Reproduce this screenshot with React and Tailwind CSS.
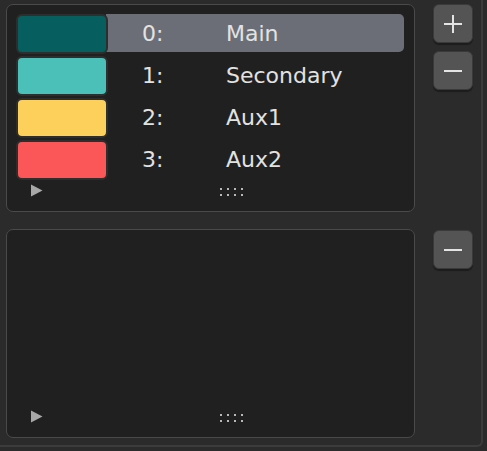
import React from "react";

const slots = [
  { id: 0, name: "Main", color: "bg-[#075e5e]", active: true },
  { id: 1, name: "Secondary", color: "bg-[#4bc0b8]" },
  { id: 2, name: "Aux1", color: "bg-[#fdd05c]" },
  { id: 3, name: "Aux2", color: "bg-[#fb5758]" },
];

const Grip = () => (
  <div className="grid grid-cols-4 gap-x-[5px] gap-y-[4px]">
    {Array.from({ length: 8 }).map((_, i) => (
      <span key={i} className="block w-[2px] h-[2px] bg-[#b8b8b8]" />
    ))}
  </div>
);

const Footer = () => (
  <div className="flex items-center h-[16px] mt-auto">
    <svg width="13" height="13" viewBox="0 0 13 13" className="ml-[14px]">
      <path d="M1 0.5 L12.5 6.5 L1 12.5 Z" fill="#a8a8a8" />
    </svg>
    <div className="ml-[177px] mt-[3px]">
      <Grip />
    </div>
  </div>
);

const IconButton = ({ plus }) => (
  <button className="w-[40px] h-[39px] rounded-[6px] bg-[#545454] border border-[#3a3a3a] shadow-[0_2px_1px_rgba(0,0,0,0.35)] flex items-center justify-center">
    <svg width="20" height="20" viewBox="0 0 20 20">
      <rect x="1" y="9" width="18" height="2" fill="#e4e4e4" />
      {plus && <rect x="9" y="1" width="2" height="18" fill="#e4e4e4" />}
    </svg>
  </button>
);

function SlotRow({ slot }) {
  return (
    <div className="relative flex items-center h-[42px]">
      {slot.active && (
        <div className="absolute left-[90px] right-0 top-[1px] h-[38px] bg-[#6b6e76] rounded-r-[5px]" />
      )}
      <div
        className={`relative z-10 w-[92px] h-[40px] rounded-[6px] border-2 border-[#2e2e2e] ${slot.color}`}
      />
      <span className="relative z-10 ml-[34px] w-[84px] text-[22px] leading-none text-[#e2e2e2]">
        {slot.id}:
      </span>
      <span className="relative z-10 text-[22px] leading-none text-[#e2e2e2]">{slot.name}</span>
    </div>
  );
}

export default function App() {
  return (
    <div
      className="w-[487px] h-[451px] bg-[#2b2b2b] overflow-hidden"
      style={{ fontFamily: '"DejaVu Sans", "Liberation Sans", sans-serif' }}
    >
      <div className="w-[483px] h-[447px] border-r-2 border-b-2 border-[#3c3c3c] rounded-br-[6px] pl-[6px] pt-[4px] flex flex-col gap-[17px]">
        <div className="flex gap-[18px]">
          <div className="w-[409px] h-[208px] rounded-[7px] border border-[#4a4a4a] bg-[#202020] pl-[9px] pr-[10px] pt-[8px] pb-[13px] flex flex-col">
            <div className="flex flex-col">
              {slots.map((s) => (
                <SlotRow key={s.id} slot={s} />
              ))}
            </div>
            <Footer />
          </div>
          <div className="flex flex-col gap-[8px]">
            <IconButton plus />
            <IconButton />
          </div>
        </div>
        <div className="flex gap-[18px]">
          <div className="w-[409px] h-[209px] rounded-[7px] border border-[#4a4a4a] bg-[#202020] pl-[9px] pr-[10px] pt-[9px] pb-[13px] flex flex-col">
            <Footer />
          </div>
          <div className="flex flex-col pt-[1px]">
            <IconButton />
          </div>
        </div>
      </div>
    </div>
  );
}
